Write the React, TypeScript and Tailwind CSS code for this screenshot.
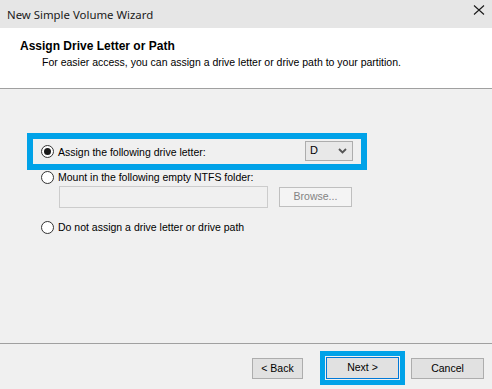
import React from 'react'

const Radio = ({ checked = false }: { checked?: boolean }) => (
  <span className="w-[13px] h-[13px] rounded-full border border-[#333333] bg-white flex items-center justify-center shrink-0">
    {checked && <span className="w-[7px] h-[7px] rounded-full bg-[#1a1a1a]" />}
  </span>
)

export default function App() {
  return (
    <div className="w-[492px] h-[389px] bg-[#f0f0f0] flex flex-col font-['Liberation_Sans',Arial,sans-serif] text-[10.5px] text-black overflow-hidden">
      {/* title bar */}
      <div className="h-[28px] bg-[#e6e6e6] flex items-center justify-between pl-[7px] pr-[6px] shrink-0">
        <span className="font-['Noto_Sans',sans-serif] text-[11.4px] text-[#1a1a1a] leading-none mt-[1px]">
          New Simple Volume Wizard
        </span>
        <svg width="12" height="12" viewBox="0 0 12 12" className="mr-[1px] -mt-[8px]">
          <path d="M1 1.5 L11 10.5 M11 1.5 L1 10.5" stroke="#1a1a1a" strokeWidth="1.1" fill="none" />
        </svg>
      </div>

      {/* header */}
      <div className="h-[61px] bg-white border-b border-[#a0a0a0] shrink-0 pt-[11px]">
        <div className="pl-[20px] text-[12px] font-bold leading-[14px]">Assign Drive Letter or Path</div>
        <div className="pl-[42px] mt-[3px] leading-[13px]">
          For easier access, you can assign a drive letter or drive path to your partition.
        </div>
      </div>

      {/* body */}
      <div className="flex-1 flex flex-col pt-[44px]">
        <div className="ml-[27px] w-[340px] h-[37px] border-[6px] border-[#00a2e8] flex items-center justify-between pl-[8px] pr-[8px]">
          <div className="flex items-center gap-[4px]">
            <Radio checked />
            <span className="leading-[14px]">Assign the following drive letter:</span>
          </div>
          <div className="w-[48px] h-[20px] border border-[#adadad] bg-[#e8e8e8] flex items-center justify-between pl-[4px] pr-[5px] -mt-[2px]">
            <span className="text-[11px]">D</span>
            <svg width="9" height="6" viewBox="0 0 9 6">
              <path d="M1 1 L4.5 4.5 L8 1" stroke="#555555" strokeWidth="1.8" fill="none" />
            </svg>
          </div>
        </div>

        <div className="ml-[41px] h-[14px] mt-[0px] flex items-center gap-[4px]">
          <Radio />
          <span className="leading-[14px]">Mount in the following empty NTFS folder:</span>
        </div>

        <div className="ml-[59px] mt-[2px] flex items-center gap-[11px]">
          <div className="w-[209px] h-[22px] border border-[#cccccc] bg-[#f0f0f0]" />
          <div className="w-[73px] h-[20px] border border-[#bfbfbf] bg-[#f4f4f4] text-[#838383] flex items-center justify-center">
            Browse...
          </div>
        </div>

        <div className="ml-[41px] h-[14px] mt-[12px] flex items-center gap-[4px]">
          <Radio />
          <span className="leading-[14px]">Do not assign a drive letter or drive path</span>
        </div>
      </div>

      {/* footer */}
      <div className="h-[46px] border-t border-[#a0a0a0] shrink-0 flex items-start pt-[7px] pl-[252px]">
        <div className="mt-[7px] w-[51px] h-[21px] border border-[#adadad] bg-[#e1e1e1] flex items-center justify-center">
          &lt; Back
        </div>
        <div className="ml-[17px] w-[85px] h-[34px] border-[5px] border-[#00a2e8] p-[1px]">
          <div className="w-full h-full border border-[#0078d7] bg-[#e1e1e1] flex items-center justify-center">
            Next &gt;
          </div>
        </div>
        <div className="ml-[6px] mt-[7px] w-[73px] h-[21px] border border-[#adadad] bg-[#e1e1e1] flex items-center justify-center">
          Cancel
        </div>
      </div>
    </div>
  )
}
